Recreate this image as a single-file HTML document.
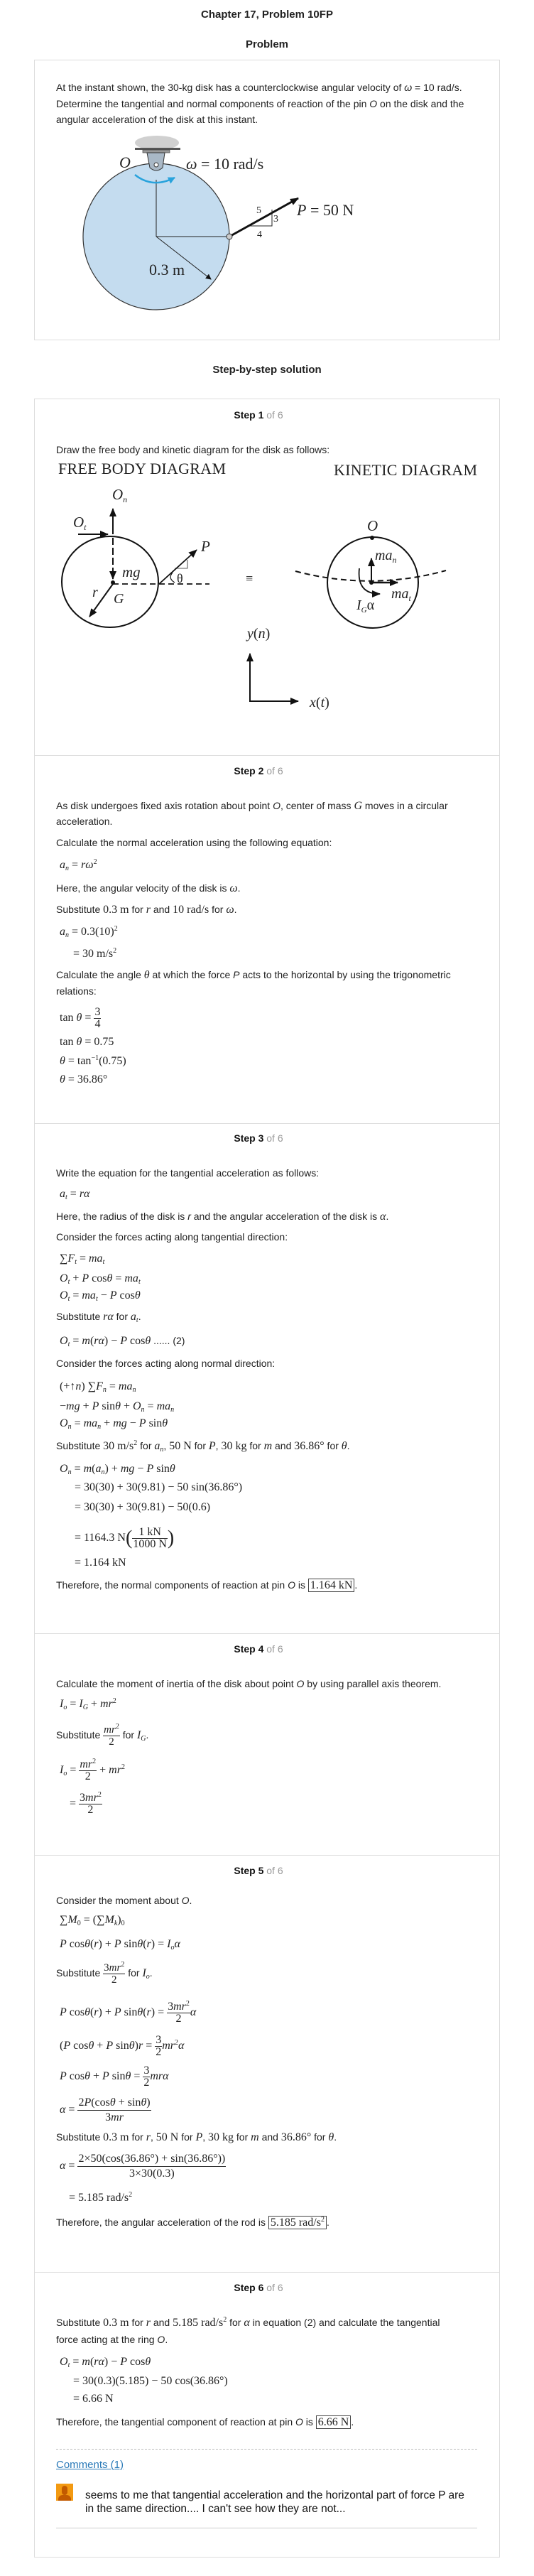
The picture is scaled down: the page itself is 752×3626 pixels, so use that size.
<!DOCTYPE html>
<html><head><meta charset="utf-8"><style>
*{margin:0;padding:0;box-sizing:border-box}
body{width:752px;height:3626px;position:relative;background:#fff;font-family:"Liberation Sans",Arial,sans-serif;color:#222;overflow:hidden}
.l{position:absolute;left:79px;white-space:nowrap;font-size:14px;line-height:20px;color:#222}
.c{position:absolute;left:0;width:752px;text-align:center;font-weight:bold;font-size:15px;line-height:20px;color:#222}
.s{position:absolute;left:0;width:728px;text-align:center;font-weight:bold;font-size:14px;line-height:20px;color:#111}
.s span{font-weight:normal;color:#999}
.m{font-family:"Liberation Serif",serif;font-size:16px}
.m i,i.m{font-style:italic}
sub{font-size:10px;vertical-align:-3px;line-height:0}
sup{font-size:10px;vertical-align:6px;line-height:0}
.fr{display:inline-block;vertical-align:middle;text-align:center;line-height:16px}
.fr>span{display:block;padding:0 1px}
.fr>span:first-child{border-bottom:1px solid #222}
.box{position:absolute;border:1px solid #ddd}
.hr{position:absolute;left:48px;width:656px;height:1px;background:#ddd}
.bx{border:1px solid #444;padding:0 2px}
</style></head><body>

<div class="c" style="top:11px">Chapter 17, Problem 10FP</div>
<div class="c" style="top:53px">Problem</div>
<div class="box" style="left:48px;top:84px;width:656px;height:395px"></div>
<div class="l" style="top:113px">At the instant shown, the 30-kg disk has a counterclockwise angular velocity of <i>ω</i> = 10 rad/s.</div>
<div class="l" style="top:136px">Determine the tangential and normal components of reaction of the pin <i>O</i> on the disk and the</div>
<div class="l" style="top:158px">angular acceleration of the disk at this instant.</div>

<div class="c" style="top:511px">Step-by-step solution</div>
<div class="box" style="left:48px;top:561px;width:656px;height:3039px"></div>
<div class="hr" style="top:1063px"></div>
<div class="hr" style="top:1581px"></div>
<div class="hr" style="top:2299px"></div>
<div class="hr" style="top:2611px"></div>
<div class="hr" style="top:3198px"></div>

<svg style="position:absolute;left:0;top:0" width="752" height="1000" font-family="Liberation Serif,serif">
<defs><marker id="ah" markerWidth="8" markerHeight="8" refX="7" refY="4" orient="auto" markerUnits="userSpaceOnUse"><path d="M0,0 L8,4 L0,8 Z" fill="#111"/></marker>
<marker id="ab" markerWidth="10" markerHeight="10" refX="9" refY="5" orient="auto" markerUnits="userSpaceOnUse"><path d="M0,0 L10,5 L0,10 Z" fill="#29a3dc"/></marker>
<marker id="ak" markerWidth="12" markerHeight="10" refX="11" refY="5" orient="auto" markerUnits="userSpaceOnUse"><path d="M0,0 L12,5 L0,10 Z" fill="#111"/></marker></defs>
<ellipse cx="221" cy="201" rx="31" ry="10" fill="#d0d0d0"/>
<rect x="190" y="208" width="64" height="3" fill="#555"/>
<rect x="201" y="211" width="38" height="4" fill="#999" stroke="#444" stroke-width="0.7"/>
<circle cx="220" cy="333" r="103" fill="#c4dcef" stroke="#333" stroke-width="1.2"/>
<path d="M207 215 L232 215 L229 236 Q220 244 211 236 Z" fill="#a9b8c6" stroke="#333"/>
<circle cx="220" cy="232" r="3" fill="#fff" stroke="#333"/>
<line x1="220" y1="253" x2="220" y2="333" stroke="#222"/>
<line x1="220" y1="333" x2="322" y2="333" stroke="#222"/>
<line x1="220" y1="333" x2="297" y2="393" stroke="#222" marker-end="url(#ah)"/>
<path d="M190 246 Q215 266 246 250" fill="none" stroke="#29a3dc" stroke-width="2.5" marker-end="url(#ab)"/>
<text x="168" y="236" font-size="22" font-style="italic" fill="#222">O</text>
<text x="262" y="238" font-size="22" fill="#222"><tspan font-style="italic">ω</tspan> = 10 rad/s</text>
<line x1="323" y1="333" x2="420" y2="279" stroke="#111" stroke-width="3" marker-end="url(#ak)"/>
<circle cx="323" cy="333" r="4" fill="#ccc" stroke="#333"/>
<path d="M352 318 L383 318 L383 295" fill="none" stroke="#222"/>
<text x="361" y="300" font-size="14" fill="#222">5</text>
<text x="385" y="312" font-size="14" fill="#222">3</text>
<text x="362" y="334" font-size="14" fill="#222">4</text>
<text x="418" y="303" font-size="22" fill="#222"><tspan font-style="italic">P</tspan> = 50 N</text>
<text x="210" y="387" font-size="22" fill="#222">0.3 m</text>

<text x="82" y="667" font-size="22" fill="#222" textLength="236">FREE BODY DIAGRAM</text>
<text x="470" y="669" font-size="22" fill="#222" textLength="202">KINETIC DIAGRAM</text>
<ellipse cx="155" cy="819" rx="68" ry="64" fill="none" stroke="#111" stroke-width="2"/>
<text x="158" y="703" font-size="21" font-style="italic" fill="#222">O<tspan font-size="12" dy="4">n</tspan></text>
<line x1="159" y1="752" x2="159" y2="716" stroke="#111" stroke-width="2" marker-end="url(#ak)"/>
<text x="103" y="742" font-size="21" font-style="italic" fill="#222">O<tspan font-size="12" dy="4">t</tspan></text>
<line x1="110" y1="752" x2="152" y2="752" stroke="#111" stroke-width="2" marker-end="url(#ak)"/>
<line x1="159" y1="757" x2="159" y2="815" stroke="#111" stroke-width="2" stroke-dasharray="10 4" marker-end="url(#ak)"/>
<circle cx="159" cy="820" r="3" fill="#111"/>
<text x="172" y="812" font-size="21" font-style="italic" fill="#222">mg</text>
<line x1="159" y1="822" x2="295" y2="822" stroke="#111" stroke-width="1.8" stroke-dasharray="8 5"/>
<line x1="159" y1="822" x2="126" y2="868" stroke="#111" stroke-width="2" marker-end="url(#ak)"/>
<text x="130" y="840" font-size="20" font-style="italic" fill="#222">r</text>
<text x="160" y="849" font-size="20" font-style="italic" fill="#222">G</text>
<line x1="224" y1="822" x2="277" y2="774" stroke="#111" stroke-width="1.8" marker-end="url(#ak)"/>
<text x="283" y="776" font-size="21" font-style="italic" fill="#222">P</text>
<path d="M246 800 L264 800 L264 788" fill="none" stroke="#222" stroke-width="0.8"/>
<path d="M243 806 Q236 814 246 820" fill="none" stroke="#111" stroke-width="1.2"/>
<text x="249" y="820" font-size="18" fill="#222">θ</text>
<text x="346" y="820" font-size="18" fill="#222">≡</text>
<circle cx="525" cy="820" r="64" fill="none" stroke="#111" stroke-width="2"/>
<text x="517" y="747" font-size="21" font-style="italic" fill="#222">O</text>
<circle cx="524" cy="757" r="3" fill="#111"/>
<path d="M416 804 Q523 832 628 803" fill="none" stroke="#111" stroke-width="2" stroke-dasharray="8 5"/>
<line x1="523" y1="818" x2="523" y2="786" stroke="#111" stroke-width="2" marker-end="url(#ak)"/>
<text x="528" y="788" font-size="20" font-style="italic" fill="#222">ma<tspan font-size="12" dy="4">n</tspan></text>
<circle cx="523" cy="820" r="3" fill="#111"/>
<line x1="523" y1="820" x2="560" y2="820" stroke="#111" stroke-width="2.5" marker-end="url(#ak)"/>
<text x="551" y="842" font-size="20" font-style="italic" fill="#222">ma<tspan font-size="12" dy="4">t</tspan></text>
<path d="M506 800 Q502 836 535 836" fill="none" stroke="#111" stroke-width="1.8" marker-end="url(#ak)"/>
<text x="502" y="858" font-size="20" font-style="italic" fill="#222">I<tspan font-size="11" dy="4">G</tspan><tspan dy="-4" font-style="normal">α</tspan></text>
<text x="348" y="898" font-size="20" fill="#222"><tspan font-style="italic">y</tspan>(<tspan font-style="italic">n</tspan>)</text>
<line x1="352" y1="987" x2="352" y2="920" stroke="#111" stroke-width="2" marker-end="url(#ak)"/>
<line x1="351" y1="987" x2="420" y2="987" stroke="#111" stroke-width="2" marker-end="url(#ak)"/>
<text x="436" y="995" font-size="20" fill="#222"><tspan font-style="italic">x</tspan>(<tspan font-style="italic">t</tspan>)</text>
</svg>

<div class="s" style="top:574px">Step 1 <span>of 6</span></div>
<div class="l" style="top:623px">Draw the free body and kinetic diagram for the disk as follows:</div>

<div class="s" style="top:1075px">Step 2 <span>of 6</span></div>
<div class="l" style="top:1124px">As disk undergoes fixed axis rotation about point <i>O</i>, center of mass <i class="m">G</i> moves in a circular</div>
<div class="l" style="top:1146px">acceleration.</div>
<div class="l" style="top:1176px">Calculate the normal acceleration using the following equation:</div>
<div class="l m" style="top:1208px;left:84px"><i>a<sub>n</sub></i> = <i>rω</i><sup>2</sup></div>
<div class="l" style="top:1240px">Here, the angular velocity of the disk is <i class="m">ω</i>.</div>
<div class="l" style="top:1270px">Substitute <span class="m">0.3 m</span> for <i class="m">r</i> and <span class="m">10 rad/s</span> for <i class="m">ω</i>.</div>
<div class="l m" style="top:1302px;left:84px"><i>a<sub>n</sub></i> = 0.3(10)<sup>2</sup></div>
<div class="l m" style="top:1333px;left:103px">= 30 m/s<sup>2</sup></div>
<div class="l" style="top:1362px">Calculate the angle <i class="m">θ</i> at which the force <i>P</i> acts to the horizontal by using the trigonometric</div>
<div class="l" style="top:1385px">relations:</div>
<div class="l m" style="top:1417px;left:84px;line-height:32px">tan <i>θ</i> = <span class="fr"><span>3</span><span>4</span></span></div>
<div class="l m" style="top:1457px;left:84px">tan <i>θ</i> = 0.75</div>
<div class="l m" style="top:1484px;left:84px"><i>θ</i> = tan<sup>−1</sup>(0.75)</div>
<div class="l m" style="top:1510px;left:84px"><i>θ</i> = 36.86°</div>

<div class="s" style="top:1592px">Step 3 <span>of 6</span></div>
<div class="l" style="top:1641px">Write the equation for the tangential acceleration as follows:</div>
<div class="l m" style="top:1671px;left:84px"><i>a<sub>t</sub></i> = <i>rα</i></div>
<div class="l" style="top:1702px">Here, the radius of the disk is <i>r</i> and the angular acceleration of the disk is <i class="m">α</i>.</div>
<div class="l" style="top:1731px">Consider the forces acting along tangential direction:</div>
<div class="l m" style="top:1762px;left:84px">∑<i>F<sub>t</sub></i> = <i>ma<sub>t</sub></i></div>
<div class="l m" style="top:1790px;left:84px"><i>O<sub>t</sub></i> + <i>P</i> cos<i>θ</i> = <i>ma<sub>t</sub></i></div>
<div class="l m" style="top:1814px;left:84px"><i>O<sub>t</sub></i> = <i>ma<sub>t</sub></i> − <i>P</i> cos<i>θ</i></div>
<div class="l" style="top:1843px">Substitute <i class="m">rα</i> for <i class="m">a<sub>t</sub></i>.</div>
<div class="l" style="top:1877px;left:84px"><span class="m"><i>O<sub>t</sub></i> = <i>m</i>(<i>rα</i>) − <i>P</i> cos<i>θ</i></span> ...... (2)</div>
<div class="l" style="top:1909px">Consider the forces acting along normal direction:</div>
<div class="l m" style="top:1942px;left:84px">(+↑<i>n</i>) ∑<i>F<sub>n</sub></i> = <i>ma<sub>n</sub></i></div>
<div class="l m" style="top:1970px;left:84px">−<i>mg</i> + <i>P</i> sin<i>θ</i> + <i>O<sub>n</sub></i> = <i>ma<sub>n</sub></i></div>
<div class="l m" style="top:1994px;left:84px"><i>O<sub>n</sub></i> = <i>ma<sub>n</sub></i> + <i>mg</i> − <i>P</i> sin<i>θ</i></div>
<div class="l" style="top:2025px">Substitute <span class="m">30 m/s<sup>2</sup></span> for <i class="m">a<sub>n</sub></i>, <span class="m">50 N</span> for <i class="m">P</i>, <span class="m">30 kg</span> for <i class="m">m</i> and <span class="m">36.86°</span> for <i class="m">θ</i>.</div>
<div class="l m" style="top:2058px;left:84px"><i>O<sub>n</sub></i> = <i>m</i>(<i>a<sub>n</sub></i>) + <i>mg</i> − <i>P</i> sin<i>θ</i></div>
<div class="l m" style="top:2084px;left:105px">= 30(30) + 30(9.81) − 50 sin(36.86°)</div>
<div class="l m" style="top:2112px;left:105px">= 30(30) + 30(9.81) − 50(0.6)</div>
<div class="l m" style="top:2149px;left:105px;line-height:32px">= 1164.3 N<span style="font-size:28px;vertical-align:middle">(</span><span class="fr"><span>1 kN</span><span>1000 N</span></span><span style="font-size:28px;vertical-align:middle">)</span></div>
<div class="l m" style="top:2190px;left:105px">= 1.164 kN</div>
<div class="l" style="top:2221px">Therefore, the normal components of reaction at pin <i>O</i> is <span class="m bx">1.164 kN</span>.</div>

<div class="s" style="top:2311px">Step 4 <span>of 6</span></div>
<div class="l" style="top:2360px">Calculate the moment of inertia of the disk about point <i>O</i> by using parallel axis theorem.</div>
<div class="l m" style="top:2389px;left:84px"><i>I<sub>o</sub></i> = <i>I<sub>G</sub></i> + <i>mr</i><sup>2</sup></div>
<div class="l" style="top:2426px;line-height:32px">Substitute <span class="fr m" style="font-size:15px"><span><i>mr</i><sup>2</sup></span><span>2</span></span> for <i class="m">I<sub>G</sub></i>.</div>
<div class="l m" style="top:2476px;left:84px;line-height:32px"><i>I<sub>o</sub></i> = <span class="fr"><span><i>mr</i><sup>2</sup></span><span>2</span></span> + <i>mr</i><sup>2</sup></div>
<div class="l m" style="top:2523px;left:98px;line-height:32px">= <span class="fr"><span>3<i>mr</i><sup>2</sup></span><span>2</span></span></div>

<div class="s" style="top:2623px">Step 5 <span>of 6</span></div>
<div class="l" style="top:2665px">Consider the moment about <i>O</i>.</div>
<div class="l m" style="top:2693px;left:84px">∑<i>M</i><sub>0</sub> = (∑<i>M<sub>k</sub></i>)<sub>0</sub></div>
<div class="l m" style="top:2727px;left:84px"><i>P</i> cos<i>θ</i>(<i>r</i>) + <i>P</i> sin<i>θ</i>(<i>r</i>) = <i>I<sub>o</sub>α</i></div>
<div class="l" style="top:2761px;line-height:32px">Substitute <span class="fr m" style="font-size:15px"><span>3<i>mr</i><sup>2</sup></span><span>2</span></span> for <i class="m">I<sub>o</sub></i>.</div>
<div class="l m" style="top:2817px;left:84px;line-height:32px"><i>P</i> cos<i>θ</i>(<i>r</i>) + <i>P</i> sin<i>θ</i>(<i>r</i>) = <span class="fr"><span>3<i>mr</i><sup>2</sup></span><span>2</span></span><i>α</i></div>
<div class="l m" style="top:2864px;left:84px;line-height:32px">(<i>P</i> cos<i>θ</i> + <i>P</i> sin<i>θ</i>)<i>r</i> = <span class="fr"><span>3</span><span>2</span></span><i>mr</i><sup>2</sup><i>α</i></div>
<div class="l m" style="top:2907px;left:84px;line-height:32px"><i>P</i> cos<i>θ</i> + <i>P</i> sin<i>θ</i> = <span class="fr"><span>3</span><span>2</span></span><i>mrα</i></div>
<div class="l m" style="top:2950px;left:84px;line-height:36px"><i>α</i> = <span class="fr" style="line-height:20px"><span>2<i>P</i>(cos<i>θ</i> + sin<i>θ</i>)</span><span>3<i>mr</i></span></span></div>
<div class="l" style="top:2998px">Substitute <span class="m">0.3 m</span> for <i class="m">r</i>, <span class="m">50 N</span> for <i class="m">P</i>, <span class="m">30 kg</span> for <i class="m">m</i> and <span class="m">36.86°</span> for <i class="m">θ</i>.</div>
<div class="l m" style="top:3029px;left:84px;line-height:36px"><i>α</i> = <span class="fr" style="line-height:20px"><span>2×50(cos(36.86°) + sin(36.86°))</span><span>3×30(0.3)</span></span></div>
<div class="l m" style="top:3084px;left:97px">= 5.185 rad/s<sup>2</sup></div>
<div class="l" style="top:3118px">Therefore, the angular acceleration of the rod is <span class="m bx">5.185 rad/s<sup>2</sup></span>.</div>

<div class="s" style="top:3210px">Step 6 <span>of 6</span></div>
<div class="l" style="top:3259px">Substitute <span class="m">0.3 m</span> for <i class="m">r</i> and <span class="m">5.185 rad/s<sup>2</sup></span> for <i class="m">α</i> in equation (2) and calculate the tangential</div>
<div class="l" style="top:3283px">force acting at the ring <i>O</i>.</div>
<div class="l m" style="top:3315px;left:84px"><i>O<sub>t</sub></i> = <i>m</i>(<i>rα</i>) − <i>P</i> cos<i>θ</i></div>
<div class="l m" style="top:3342px;left:103px">= 30(0.3)(5.185) − 50 cos(36.86°)</div>
<div class="l m" style="top:3367px;left:103px">= 6.66 N</div>
<div class="l" style="top:3399px">Therefore, the tangential component of reaction at pin <i>O</i> is <span class="m bx">6.66 N</span>.</div>
<div style="position:absolute;left:79px;top:3447px;width:593px;border-top:1px dashed #bbb"></div>
<div class="l" style="top:3460px;color:#2a7ab8;text-decoration:underline;font-size:15px">Comments (1)</div>
<div style="position:absolute;left:79px;top:3496px;width:24px;height:24px;background:#f39a12;overflow:hidden"><div style="position:absolute;left:8px;top:3px;width:8px;height:13px;border-radius:4px;background:#c25a00"></div><div style="position:absolute;left:3px;top:16px;width:18px;height:10px;border-radius:6px 6px 0 0;background:#c25a00"></div></div>
<div class="l" style="top:3503px;left:120px;font-size:15.5px;line-height:19px;color:#111">seems to me that tangential acceleration and the horizontal part of force P are<br>in the same direction.... I can't see how they are not...</div>
<div style="position:absolute;left:79px;top:3558px;width:593px;height:1px;background:#ccc"></div>
</body></html>
